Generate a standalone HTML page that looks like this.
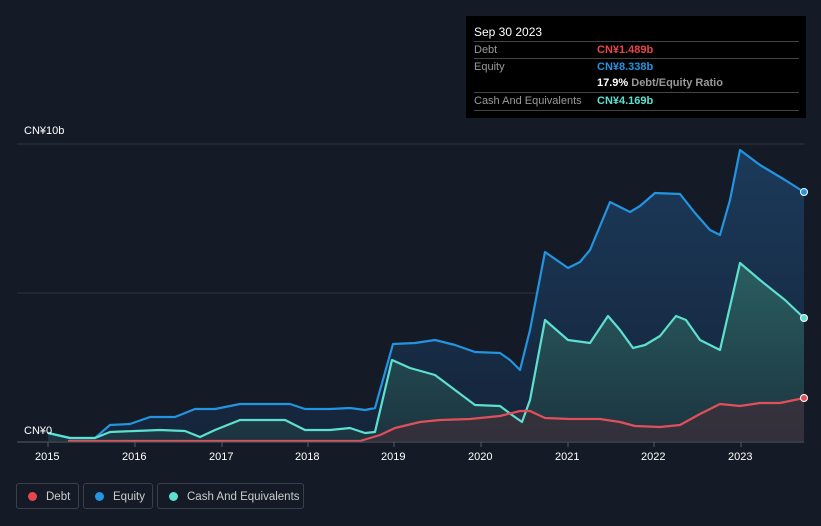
<!DOCTYPE html>
<html><head><meta charset="utf-8"><style>
body{margin:0;background:#151b26;width:821px;height:526px;overflow:hidden;font-family:"Liberation Sans",sans-serif;position:relative}
.tip{position:absolute;left:466px;top:16px;width:340px;height:102px;background:#000;color:#fff;font-size:11px}
.tip .h{position:absolute;left:8px;top:9px;font-size:12px;color:#fff}
.row{position:absolute;left:8px;width:325px;border-top:1px solid #444;height:17px;line-height:17px;color:#999}
.row span{position:absolute;left:123px;font-weight:bold}
.leg{position:absolute;top:483px;height:26px;border:1px solid #3a404a;border-radius:3px;color:#ccc;font-size:11.5px;line-height:26px;box-sizing:border-box;white-space:nowrap}
.leg i{display:inline-block;width:9px;height:9px;border-radius:50%;margin:0 9px 0 11px;vertical-align:-1px}
.ax{position:absolute;color:#fff;font-size:11px}
</style></head><body>
<svg width="821" height="526" style="position:absolute;left:0;top:0">
<defs>
<linearGradient id="ge" x1="0" y1="0" x2="0" y2="1"><stop offset="0" stop-color="#1b3a5a"/><stop offset="1" stop-color="#15243a"/></linearGradient>
<linearGradient id="gc" x1="0" y1="0" x2="0" y2="1"><stop offset="0" stop-color="#2a5e60"/><stop offset="1" stop-color="#1c3440"/></linearGradient>
</defs>
<line x1="17" y1="144" x2="804" y2="144" stroke="#2e3440"/>
<line x1="17" y1="293" x2="804" y2="293" stroke="#2e3440"/>
<polygon fill="url(#ge)" points="48,433 70,438 95,438 110,425 130,424 150,417 175,417 195,409 215,409 240,404 290,404 305,409 330,409 350,408 365,410 375,408 393,344 415,343 435,340 455,345 475,352 500,353 510,360 520,370 530,330 545,252 568,268 580,262 590,250 610,202 630,212 640,206 655,193 680,194 695,213 710,230 720,235 730,200 740,150 760,165 785,180 804,192 804,441 48,441"/>
<polygon fill="url(#gc)" points="48,433 70,438 95,438 110,432 135,431 160,430 185,431 200,437 215,430 240,420 285,420 305,430 330,430 350,428 365,433 375,432 392,360 410,368 435,375 455,390 475,405 500,406 512,415 522,422 530,400 545,320 568,340 590,343 608,316 620,330 633,348 645,345 660,336 676,316 686,320 700,340 720,350 740,263 760,280 785,300 804,318 804,441 48,441"/>
<polygon fill="#3a2f3a" opacity="0.8" points="48,441 360,441 380,435 395,428 420,422 440,420 470,419 500,416 520,411 530,411 545,418 570,419 600,419 620,422 635,426 660,427 680,425 700,414 720,404 740,406 760,403 780,403 804,398 804,441"/>
<polyline fill="none" stroke="#2394e0" stroke-width="2.2" stroke-linejoin="round" points="48,433 70,438 95,438 110,425 130,424 150,417 175,417 195,409 215,409 240,404 290,404 305,409 330,409 350,408 365,410 375,408 393,344 415,343 435,340 455,345 475,352 500,353 510,360 520,370 530,330 545,252 568,268 580,262 590,250 610,202 630,212 640,206 655,193 680,194 695,213 710,230 720,235 730,200 740,150 760,165 785,180 804,192"/>
<polyline fill="none" stroke="#5de0cf" stroke-width="2.2" stroke-linejoin="round" points="48,433 70,438 95,438 110,432 135,431 160,430 185,431 200,437 215,430 240,420 285,420 305,430 330,430 350,428 365,433 375,432 392,360 410,368 435,375 455,390 475,405 500,406 512,415 522,422 530,400 545,320 568,340 590,343 608,316 620,330 633,348 645,345 660,336 676,316 686,320 700,340 720,350 740,263 760,280 785,300 804,318"/>
<polyline fill="none" stroke="#e0505a" stroke-width="2.2" stroke-linejoin="round" points="68,441 360,441 380,435 395,428 420,422 440,420 470,419 500,416 520,411 530,411 545,418 570,419 600,419 620,422 635,426 660,427 680,425 700,414 720,404 740,406 760,403 780,403 804,398"/>
<line x1="17" y1="442" x2="804" y2="442" stroke="#555c66"/>
<g stroke="#555c66"><line x1="48" y1="442" x2="48" y2="447"/><line x1="135" y1="442" x2="135" y2="447"/><line x1="222" y1="442" x2="222" y2="447"/><line x1="308" y1="442" x2="308" y2="447"/><line x1="394" y1="442" x2="394" y2="447"/><line x1="481" y1="442" x2="481" y2="447"/><line x1="568" y1="442" x2="568" y2="447"/><line x1="654" y1="442" x2="654" y2="447"/><line x1="741" y1="442" x2="741" y2="447"/></g>
<circle cx="804" cy="192" r="3.5" fill="#2394e0" stroke="#fff" stroke-width="1"/>
<circle cx="804" cy="318" r="3.5" fill="#5de0cf" stroke="#fff" stroke-width="1"/>
<circle cx="804" cy="398" r="3.5" fill="#e0505a" stroke="#fff" stroke-width="1"/>
</svg>
<div class="ax" style="left:24px;top:125px">CN¥10b</div>
<div class="ax" style="left:24px;top:425px">CN¥0</div>
<div class="ax" style="left:35px;top:451px">2015</div>
<div class="ax" style="left:122px;top:451px">2016</div>
<div class="ax" style="left:209px;top:451px">2017</div>
<div class="ax" style="left:295px;top:451px">2018</div>
<div class="ax" style="left:381px;top:451px">2019</div>
<div class="ax" style="left:468px;top:451px">2020</div>
<div class="ax" style="left:555px;top:451px">2021</div>
<div class="ax" style="left:641px;top:451px">2022</div>
<div class="ax" style="left:728px;top:451px">2023</div>
<div class="tip">
<div class="h">Sep 30 2023</div>
<div class="row" style="top:25px">Debt<span style="color:#e8454d">CN¥1.489b</span></div>
<div class="row" style="top:42px">Equity<span style="color:#2394e0">CN¥8.338b</span></div>
<div class="row" style="top:59px;border-top:none"><span style="color:#fff">17.9% <b style="color:#999">Debt/Equity Ratio</b></span></div>
<div class="row" style="top:76px">Cash And Equivalents<span style="color:#5de0cf">CN¥4.169b</span></div>
<div class="row" style="top:94px;height:0"></div>
</div>
<div class="leg" style="left:16px;width:63px"><i style="background:#e8454d"></i>Debt</div>
<div class="leg" style="left:83px;width:70px"><i style="background:#2394e0"></i>Equity</div>
<div class="leg" style="left:157px;width:147px"><i style="background:#5de0cf"></i>Cash And Equivalents</div>
</body></html>
